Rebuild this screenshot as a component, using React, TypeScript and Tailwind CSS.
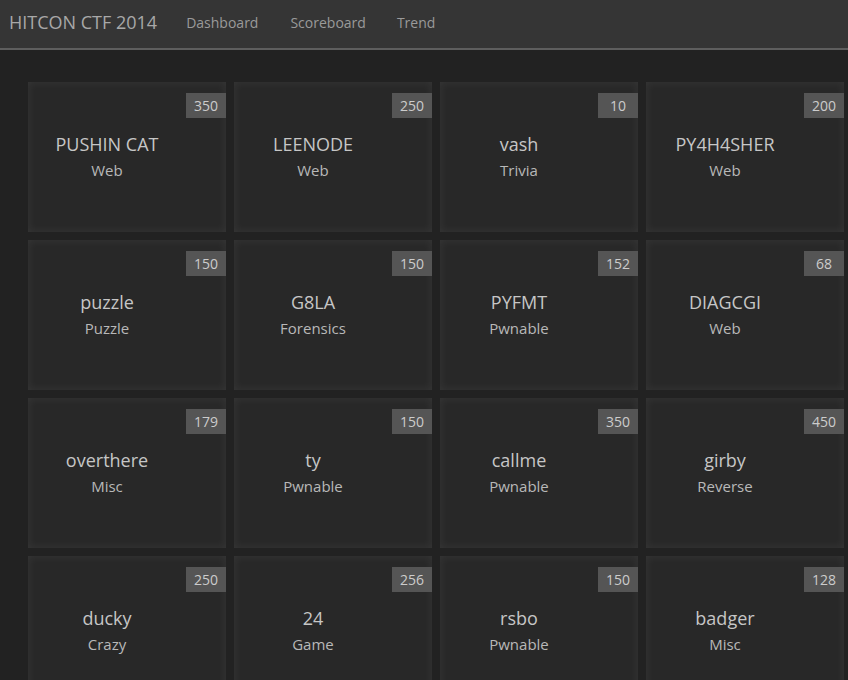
const challenges = [
  { name: "PUSHIN CAT", category: "Web", points: 350 },
  { name: "LEENODE", category: "Web", points: 250 },
  { name: "vash", category: "Trivia", points: 10 },
  { name: "PY4H4SHER", category: "Web", points: 200 },
  { name: "puzzle", category: "Puzzle", points: 150 },
  { name: "G8LA", category: "Forensics", points: 150 },
  { name: "PYFMT", category: "Pwnable", points: 152 },
  { name: "DIAGCGI", category: "Web", points: 68 },
  { name: "overthere", category: "Misc", points: 179 },
  { name: "ty", category: "Pwnable", points: 150 },
  { name: "callme", category: "Pwnable", points: 350 },
  { name: "girby", category: "Reverse", points: 450 },
  { name: "ducky", category: "Crazy", points: 250 },
  { name: "24", category: "Game", points: 256 },
  { name: "rsbo", category: "Pwnable", points: 150 },
  { name: "badger", category: "Misc", points: 128 },
];

const App = () => {
  return (
    <div className="min-h-screen bg-[#222222] font-['Open_Sans',sans-serif]">
      <nav className="h-[50px] pb-[3px] bg-[#353535] border-b-2 border-[#5e5e5e] flex items-center">
        <span className="pl-[9px] text-[18px] text-[#a8a8a8]">HITCON CTF 2014</span>
        <div className="flex ml-[29px] text-[14px] text-[#9a9a9a]">
          <a href="#" className="mr-[32px]">Dashboard</a>
          <a href="#" className="mr-[31px]">Scoreboard</a>
          <a href="#">Trend</a>
        </div>
      </nav>

      <div className="pl-[28px] pt-[32px] grid grid-cols-[repeat(4,198px)] gap-[8px]">
        {challenges.map((c) => (
          <div
            key={c.name}
            className="relative h-[150px] bg-[#282828] shadow-[inset_0_0_10px_rgba(255,255,255,0.07)] flex flex-col items-center pr-[40px] pt-[50px]"
          >
            <span className="absolute top-[11px] right-0 w-[40px] h-[25px] pb-[1px] bg-[#555555] text-[#cccccc] text-[14px] flex items-center justify-center">
              {c.points}
            </span>
            <div className="text-[18px] leading-[24px] text-[#c6c6c6]">{c.name}</div>
            <div className="text-[15px] leading-[20px] mt-[4px] text-[#b8b8b8]">{c.category}</div>
          </div>
        ))}
      </div>
    </div>
  );
};

export default App;
